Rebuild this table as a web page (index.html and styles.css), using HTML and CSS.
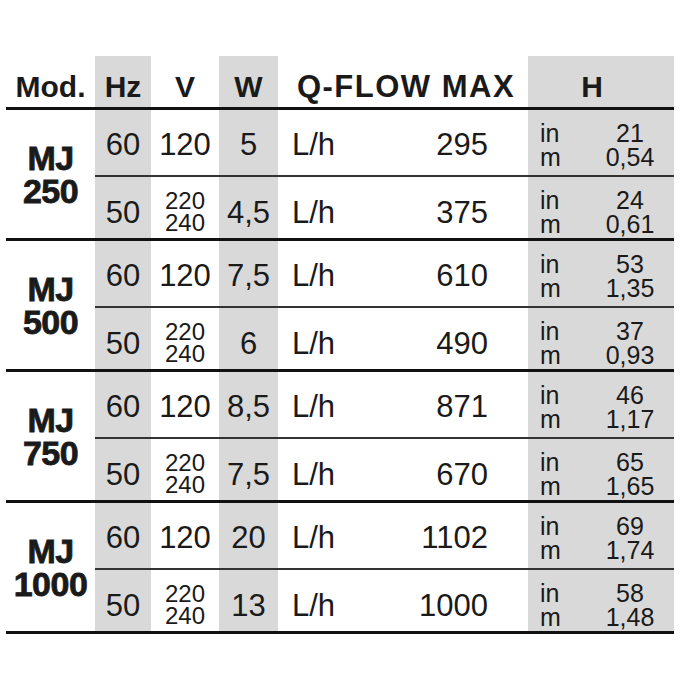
FILE: index.html
```html
<!DOCTYPE html>
<html>
<head>
<meta charset="utf-8">
<link rel="stylesheet" href="styles.css">
</head>
<body>
<div class="spec">
  <div class="head">
    <div class="hc">Mod.</div>
    <div class="hc g">Hz</div>
    <div class="hc">V</div>
    <div class="hc g">W</div>
    <div class="hc qh">Q-FLOW MAX</div>
    <div class="hc g hh">H</div>
  </div>

  <div class="group">
    <div class="model">MJ<br>250</div>
    <div class="cell g r1">60</div>
    <div class="cell r1">120</div>
    <div class="cell g r1">5</div>
    <div class="cell flow r1"><span>L/h</span><span>295</span></div>
    <div class="cell g hcell r1"><div class="units">in<br>m</div><div class="vals">21<br>0,54</div></div>
    <div class="cell g r2">50</div>
    <div class="cell r2"><div class="volt">220<br>240</div></div>
    <div class="cell g r2">4,5</div>
    <div class="cell flow r2"><span>L/h</span><span>375</span></div>
    <div class="cell g hcell r2"><div class="units">in<br>m</div><div class="vals">24<br>0,61</div></div>
  </div>

  <div class="group">
    <div class="model">MJ<br>500</div>
    <div class="cell g r1">60</div>
    <div class="cell r1">120</div>
    <div class="cell g r1">7,5</div>
    <div class="cell flow r1"><span>L/h</span><span>610</span></div>
    <div class="cell g hcell r1"><div class="units">in<br>m</div><div class="vals">53<br>1,35</div></div>
    <div class="cell g r2">50</div>
    <div class="cell r2"><div class="volt">220<br>240</div></div>
    <div class="cell g r2">6</div>
    <div class="cell flow r2"><span>L/h</span><span>490</span></div>
    <div class="cell g hcell r2"><div class="units">in<br>m</div><div class="vals">37<br>0,93</div></div>
  </div>

  <div class="group">
    <div class="model">MJ<br>750</div>
    <div class="cell g r1">60</div>
    <div class="cell r1">120</div>
    <div class="cell g r1">8,5</div>
    <div class="cell flow r1"><span>L/h</span><span>871</span></div>
    <div class="cell g hcell r1"><div class="units">in<br>m</div><div class="vals">46<br>1,17</div></div>
    <div class="cell g r2">50</div>
    <div class="cell r2"><div class="volt">220<br>240</div></div>
    <div class="cell g r2">7,5</div>
    <div class="cell flow r2"><span>L/h</span><span>670</span></div>
    <div class="cell g hcell r2"><div class="units">in<br>m</div><div class="vals">65<br>1,65</div></div>
  </div>

  <div class="group">
    <div class="model">MJ<br>1000</div>
    <div class="cell g r1">60</div>
    <div class="cell r1">120</div>
    <div class="cell g r1">20</div>
    <div class="cell flow r1"><span>L/h</span><span>1102</span></div>
    <div class="cell g hcell r1"><div class="units">in<br>m</div><div class="vals">69<br>1,74</div></div>
    <div class="cell g r2">50</div>
    <div class="cell r2"><div class="volt">220<br>240</div></div>
    <div class="cell g r2">13</div>
    <div class="cell flow r2"><span>L/h</span><span>1000</span></div>
    <div class="cell g hcell r2"><div class="units">in<br>m</div><div class="vals">58<br>1,48</div></div>
  </div>
</div>
</body>
</html>
```

FILE: styles.css
```css
html, body {
  margin: 0;
  background: #ffffff;
}
body {
  padding: 56px 0 0 6px;
  font-family: "Liberation Sans", Arial, sans-serif;
  color: #1a1a1a;
}
.spec {
  width: 668px;
}
.head,
.group {
  display: grid;
  grid-template-columns: 89px 56px 68px 59px 250px 146px;
}
.head {
  height: 54px;
  box-sizing: border-box;
  border-bottom: 3px solid #111;
}
.hc {
  display: flex;
  align-items: flex-end;
  justify-content: center;
  padding-bottom: 5px;
  font-weight: bold;
  font-size: 30px;
  line-height: 30px;
}
.qh {
  font-size: 31px;
  letter-spacing: 1.5px;
  padding-left: 6px;
}
.hh {
  padding-right: 18px;
}
.g {
  background: #d9d9d9;
}
.group {
  grid-template-rows: 67px 64px;
}
.model {
  grid-row: span 2;
  display: flex;
  align-items: center;
  justify-content: center;
  text-align: center;
  border-bottom: 3px solid #111;
  padding-top: 2px;
  font-weight: bold;
  font-size: 34px;
  line-height: 33px;
  letter-spacing: -0.5px;
  -webkit-text-stroke: 0.8px #1a1a1a;
}
.cell {
  box-sizing: border-box;
  display: flex;
  align-items: center;
  justify-content: center;
  font-size: 31px;
  line-height: 31px;
}
.r1 {
  border-bottom: 2px solid #333;
  padding-top: 4px;
}
.r2 {
  border-bottom: 3px solid #111;
  padding-top: 9px;
}
.volt {
  font-size: 24px;
  line-height: 22px;
  text-align: center;
}
.flow {
  justify-content: space-between;
  padding-left: 14px;
  padding-right: 40px;
}
.hcell {
  justify-content: flex-start;
  padding-left: 12px;
  font-size: 25px;
  line-height: 24px;
}
.units {
  width: 46px;
}
.vals {
  flex: 1;
  text-align: center;
}
```
